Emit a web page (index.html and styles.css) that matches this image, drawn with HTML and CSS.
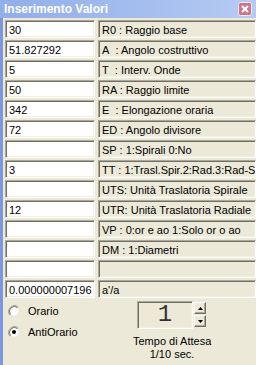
FILE: index.html
```html
<!DOCTYPE html>
<html>
<head>
<meta charset="utf-8">
<link rel="stylesheet" href="styles.css">
</head>
<body>
<div class="window">
  <div class="titlebar">
    <span class="title">Inserimento Valori</span>
    <span class="close"><svg width="14" height="14" viewBox="0 0 14 14"><rect x="0.5" y="0.5" width="13" height="13" rx="2" fill="#c9778a" stroke="#f4e8ee"/><path d="M4 4 L10 10 M10 4 L4 10" stroke="#fff" stroke-width="2"/></svg></span>
  </div>
  <div class="body">
    <div class="rows">
      <div class="row"><div class="input">30</div><div class="label">R0 : Raggio base</div></div>
      <div class="row"><div class="input">51.827292</div><div class="label">A&nbsp; : Angolo costruttivo</div></div>
      <div class="row"><div class="input">5</div><div class="label">T&nbsp; : Interv. Onde</div></div>
      <div class="row"><div class="input">50</div><div class="label">RA : Raggio limite</div></div>
      <div class="row"><div class="input">342</div><div class="label">E&nbsp; : Elongazione oraria</div></div>
      <div class="row"><div class="input">72</div><div class="label">ED : Angolo divisore</div></div>
      <div class="row"><div class="input"></div><div class="label">SP : 1:Spirali 0:No</div></div>
      <div class="row"><div class="input">3</div><div class="label">TT : 1:Trasl.Spir.2:Rad.3:Rad-Spir</div></div>
      <div class="row"><div class="input"></div><div class="label">UTS: Unità Traslatoria Spirale</div></div>
      <div class="row"><div class="input">12</div><div class="label">UTR: Unità Traslatoria Radiale</div></div>
      <div class="row"><div class="input"></div><div class="label">VP : 0:or e ao 1:Solo or o ao</div></div>
      <div class="row"><div class="input"></div><div class="label">DM : 1:Diametri</div></div>
      <div class="row"><div class="input"></div><div class="label"></div></div>
      <div class="row"><div class="input">0.000000007196</div><div class="label">a'/a</div></div>
    </div>
    <div class="bottom">
      <div class="radios">
        <div class="radio"><svg width="12" height="12" viewBox="0 0 12 12"><path d="M10.2 1.8 A6 6 0 0 0 1.8 10.2" fill="none" stroke="#aca899"/><circle cx="6" cy="6" r="4.5" fill="#fff"/><path d="M9.5 2.5 A5 5 0 0 0 2.5 9.5" fill="none" stroke="#716f64"/></svg><span>Orario</span></div>
        <div class="radio"><svg width="12" height="12" viewBox="0 0 12 12"><path d="M10.2 1.8 A6 6 0 0 0 1.8 10.2" fill="none" stroke="#aca899"/><circle cx="6" cy="6" r="4.5" fill="#fff"/><path d="M9.5 2.5 A5 5 0 0 0 2.5 9.5" fill="none" stroke="#716f64"/><circle cx="6" cy="6" r="2" fill="#000"/></svg><span>AntiOrario</span></div>
      </div>
      <div class="wait">
        <div class="spin">
          <div class="spinbox">1</div>
          <div class="spinbtns">
            <div class="sbtn"><svg width="5" height="3" viewBox="0 0 5 3"><path d="M2.5 0 L5 3 L0 3 Z" fill="#000"/></svg></div>
            <div class="sbtn"><svg width="5" height="3" viewBox="0 0 5 3"><path d="M0 0 L5 0 L2.5 3 Z" fill="#000"/></svg></div>
          </div>
        </div>
        <div class="caption">Tempo di Attesa<br>1/10 sec.</div>
      </div>
    </div>
  </div>
</div>
</body>
</html>
```
FILE: styles.css
```css
html, body {
  margin: 0;
  padding: 0;
  background: #ece9d8;
}
.window {
  width: 256px;
  height: 365px;
  overflow: hidden;
  font-family: "Liberation Sans", Arial, sans-serif;
  font-size: 11px;
  color: #000;
  display: flex;
  flex-direction: column;
}
.titlebar {
  height: 18px;
  flex: none;
  background: linear-gradient(to right, #92aee9, #a6bfef 60%, #b6cbf3);
  display: flex;
  align-items: center;
  justify-content: space-between;
  padding: 0 4px 0 4px;
  box-sizing: border-box;
}
.title {
  color: #fff;
  font-weight: bold;
  font-size: 12px;
  font-family: "Liberation Sans", Arial, sans-serif;
}
.close {
  display: flex;
}
.body {
  flex: 1;
  border-left: 3px solid #7b97e0;
  padding: 2px 0 0 2px;
  display: flex;
  flex-direction: column;
}
.rows {
  display: flex;
  flex-direction: column;
  gap: 2px;
}
.row {
  display: flex;
  gap: 3px;
  height: 18px;
}
.input, .label {
  box-sizing: border-box;
  border-top: 1px solid #aca899;
  border-left: 1px solid #aca899;
  border-bottom: 1px solid #fff;
  border-right: 1px solid #fff;
  box-shadow: inset 1px 1px 0 #716f64, inset -1px -1px 0 #f1efe2;
  padding: 3px 0 0 3px;
  line-height: 12px;
  white-space: nowrap;
  overflow: hidden;
}
.input {
  width: 90px;
  flex: none;
  background: #fff;
}
.label {
  flex: 1;
}
.bottom {
  display: flex;
  padding-top: 3px;
}
.radios {
  width: 120px;
  display: flex;
  flex-direction: column;
  gap: 8px;
  padding: 3px 0 0 3px;
}
.radio {
  display: flex;
  align-items: center;
  gap: 8px;
  height: 13px;
}
.wait {
  display: flex;
  flex-direction: column;
  width: 78px;
  margin-left: 5px;
}
.spin {
  display: flex;
  gap: 1px;
  margin-left: 4px;
}
.spinbox {
  width: 56px;
  height: 28px;
  box-sizing: border-box;
  border-top: 1px solid #aca899;
  border-left: 1px solid #aca899;
  border-bottom: 1px solid #fff;
  border-right: 1px solid #fff;
  box-shadow: inset 1px 1px 0 #716f64, inset -1px -1px 0 #f1efe2;
  font-family: "Liberation Mono", monospace;
  font-size: 24px;
  line-height: 26px;
  text-align: center;
  color: #333;
}
.spinbtns {
  display: flex;
  flex-direction: column;
  gap: 1px;
  padding-top: 1px;
}
.sbtn {
  width: 12px;
  height: 12px;
  box-sizing: border-box;
  background: #ece9d8;
  border-top: 1px solid #fff;
  border-left: 1px solid #fff;
  border-bottom: 1px solid #716f64;
  border-right: 1px solid #716f64;
  box-shadow: inset -1px -1px 0 #aca899;
  display: flex;
  align-items: center;
  justify-content: center;
}
.caption {
  text-align: center;
  margin-top: 6px;
  line-height: 13px;
  white-space: nowrap;
}
```
